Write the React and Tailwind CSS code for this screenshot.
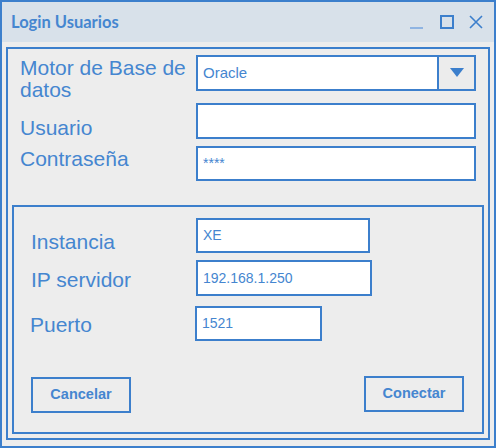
import React from "react";

const B = "border-2 border-[#3c7fcc]";
const TXT = "text-[#4586d0]";

function Field({ w, h, x = 0, children, small }) {
  return (
    <div
      className={`${B} bg-white flex items-center pl-[5px] ${small ? "text-[15px]" : "text-[14px]"} ${TXT} shrink-0`}
      style={{ width: w, height: h, marginLeft: x }}
    >
      {children}
    </div>
  );
}

export default function App() {
  return (
    <div
      className={`w-[496px] h-[448px] ${B} bg-[#ededed] flex flex-col`}
      style={{ fontFamily: '"Liberation Sans", Arial, sans-serif' }}
    >
      {/* title bar */}
      <div className="h-[40px] bg-[#d8e1ea] flex items-center pl-[9px] shrink-0">
        <span
          className={`font-bold text-[16.5px] ${TXT}`}
          style={{ fontFamily: 'Lato, "Noto Sans", sans-serif' }}
        >
          Login Usuarios
        </span>
        <div className="ml-auto flex items-start mr-[11px]">
          <div className="w-[13px] h-[2px] bg-[#8fb4e2] mt-[12px]" />
          <div className="w-[14px] h-[14px] border-2 border-[#3c7fcc] ml-[17px] mt-[0px]" />
          <svg width="14" height="14" viewBox="0 0 14 14" className="ml-[15px]">
            <path d="M1 1 L13 13 M13 1 L1 13" stroke="#3c7fcc" strokeWidth="1.6" fill="none" />
          </svg>
        </div>
      </div>

      {/* main panel */}
      <div className={`mx-[4px] mt-[5px] mb-[6px] flex-1 ${B} flex flex-col`}>
        <div className="pt-[6px] flex flex-col">
          {/* row 1 */}
          <div className="flex h-[36px] items-start">
            <div className={`w-[188px] pl-[12px] mt-[2px] text-[21px] leading-[22px] ${TXT}`}>
              Motor de Base de
              <br />
              datos
            </div>
            <div className={`${B} bg-white w-[280px] h-[36px] flex`}>
              <div className={`flex-1 flex items-center pl-[5px] text-[15px] ${TXT}`}>Oracle</div>
              <div className="w-[2px] bg-[#3c7fcc]" />
              <div className="w-[35px] bg-[#ececec] flex items-center justify-center">
                <svg width="14" height="10" viewBox="0 0 14 10">
                  <path d="M0 0 H14 L7 9 Z" fill="#3c7fcc" />
                </svg>
              </div>
            </div>
          </div>
          {/* row 2 */}
          <div className="flex h-[36px] items-start mt-[12px]">
            <div className={`w-[188px] pl-[12px] mt-[14px] text-[21px] leading-[22px] ${TXT}`}>Usuario</div>
            <Field w={280} h={36} />
          </div>
          {/* row 3 */}
          <div className="flex h-[35px] items-start mt-[7px]">
            <div className={`w-[188px] pl-[12px] mt-[2px] text-[21px] leading-[22px] ${TXT}`}>Contraseña</div>
            <Field w={280} h={35}>****</Field>
          </div>
        </div>

        {/* group */}
        <div className={`mx-[4px] mb-[4px] mt-[24px] flex-1 ${B} flex flex-col`}>
          <div className="flex h-[35px] items-start mt-[11px]">
            <div className={`w-[182px] pl-[17px] mt-[13px] text-[21px] leading-[22px] ${TXT}`}>Instancia</div>
            <Field w={174} h={35}>XE</Field>
          </div>
          <div className="flex h-[36px] items-start mt-[7px]">
            <div className={`w-[182px] pl-[17px] mt-[9px] text-[21px] leading-[22px] ${TXT}`}>IP servidor</div>
            <Field w={176} h={36}>192.168.1.250</Field>
          </div>
          <div className="flex h-[35px] items-start mt-[10px]">
            <div className={`w-[181px] pl-[16px] mt-[8px] text-[21px] leading-[22px] ${TXT}`}>Puerto</div>
            <Field w={127} h={35}>1521</Field>
          </div>
          <div className="flex justify-between items-start mt-[35px] pl-[17px] pr-[18px]">
            <button className={`${B} w-[100px] h-[36px] mt-[1px] flex items-center justify-center font-bold text-[14.5px] ${TXT}`}>
              Cancelar
            </button>
            <button className={`${B} w-[100px] h-[36px] flex items-center justify-center font-bold text-[14.5px] ${TXT}`}>
              Conectar
            </button>
          </div>
        </div>
      </div>
    </div>
  );
}
